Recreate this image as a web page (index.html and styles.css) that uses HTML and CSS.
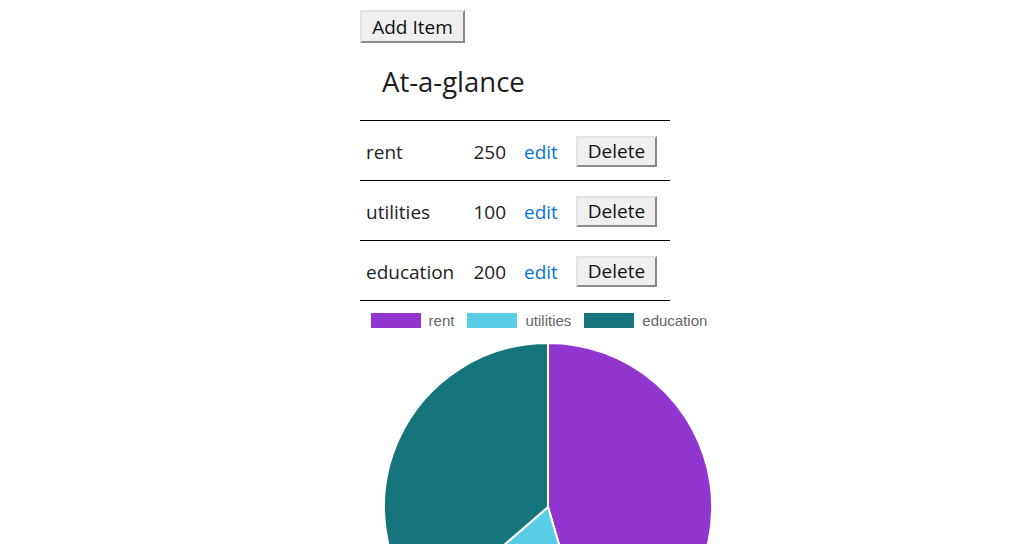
FILE: index.html
```html
<!DOCTYPE html>
<html>
<head>
<meta charset="utf-8">
<link rel="stylesheet" href="styles.css">
</head>
<body>
<div class="page">
  <button class="btn btn-add">Add Item</button>
  <h2 class="title">At-a-glance</h2>
  <table class="items">
    <tr>
      <td class="name">rent</td>
      <td class="amount">250</td>
      <td class="edit"><a href="#">edit</a></td>
      <td class="del"><button class="btn btn-del">Delete</button></td>
    </tr>
    <tr>
      <td class="name">utilities</td>
      <td class="amount">100</td>
      <td class="edit"><a href="#">edit</a></td>
      <td class="del"><button class="btn btn-del">Delete</button></td>
    </tr>
    <tr>
      <td class="name">education</td>
      <td class="amount">200</td>
      <td class="edit"><a href="#">edit</a></td>
      <td class="del"><button class="btn btn-del">Delete</button></td>
    </tr>
  </table>
  <div class="chart">
    <div class="legend">
      <span class="swatch rent"></span><span class="label">rent</span>
      <span class="swatch utilities"></span><span class="label">utilities</span>
      <span class="swatch education"></span><span class="label">education</span>
    </div>
    <svg class="pie" width="330" height="330" viewBox="-1 -1 330 330">
      <path class="slice-rent" d="M164 164 L164 0 A164 164 0 0 1 210.2 321.4 Z"/>
      <path class="slice-utilities" d="M164 164 L210.2 321.4 A164 164 0 0 1 40.1 271.4 Z"/>
      <path class="slice-education" d="M164 164 L40.1 271.4 A164 164 0 0 1 164 0 Z"/>
    </svg>
  </div>
</div>
</body>
</html>
```
FILE: styles.css
```css
html, body {
  margin: 0;
  padding: 0;
  background: #fff;
  overflow: hidden;
}
body {
  font-family: "Open Sans", "Noto Sans", sans-serif;
  color: #222;
}
.page {
  width: 304px;
  margin: 0 auto;
  padding-top: 10px;
}
.btn {
  font-family: "Open Sans", "Noto Sans", sans-serif;
  color: #111;
  background: #efefef;
  border: 2px solid;
  border-color: #e3e3e3 #8a8a8a #8a8a8a #e3e3e3;
  padding: 0;
  margin: 0;
  display: block;
}
.btn-add {
  width: 105px;
  height: 33px;
  font-size: 19px;
}
.title {
  font-size: 27.5px;
  font-weight: 400;
  margin: 0;
  padding: 21px 0 0 22px;
  line-height: 36px;
  box-sizing: border-box;
  height: 77px;
  color: #1e1e1e;
}
.items {
  width: 310px;
  border-collapse: collapse;
  font-size: 19px;
}
.items tr {
  height: 60px;
  border-top: 1px solid #000;
  border-bottom: 1px solid #000;
}
.items td {
  padding: 0;
  vertical-align: middle;
  padding-top: 2px;
}
.name {
  width: 100px;
  padding-left: 6px !important;
  box-sizing: border-box;
}
.amount {
  width: 46px;
  text-align: right;
}
.edit {
  width: 52px;
  padding-left: 18px !important;
}
.edit a {
  color: #0b72d8;
  text-decoration: none;
}
.del {
  padding-top: 1px !important;
}
.btn-del {
  width: 81px;
  height: 31px;
  font-size: 19px;
}
.chart {
  width: 375px;
  display: flex;
  flex-direction: column;
  align-items: center;
}
.legend {
  display: flex;
  align-items: center;
  height: 38px;
  margin-left: -17px;
  font-family: "Liberation Sans", Arial, sans-serif;
  font-size: 15px;
  color: #666;
}
.swatch {
  width: 50px;
  height: 15px;
  margin-right: 8px;
}
.label {
  margin-right: 13px;
}
.label:last-child {
  margin-right: 0;
}
.swatch.rent { background: #9137cf; }
.swatch.utilities { background: #5acde6; }
.swatch.education { background: #15747c; }
.pie {
  display: block;
  margin-top: 3px;
}
.pie path {
  stroke: #fff;
  stroke-width: 2;
}
.slice-rent { fill: #9137cf; }
.slice-utilities { fill: #5acde6; }
.slice-education { fill: #15747c; }
```
